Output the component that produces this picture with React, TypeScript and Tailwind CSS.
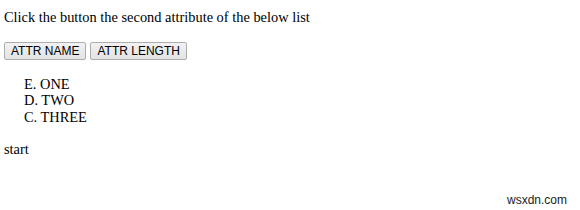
import React from 'react';

const App: React.FC = () => {
    const items = ['ONE', 'TWO', 'THREE'];
    const letters = ['E', 'D', 'C'];

    return (
        <div className="w-[580px] h-[210px] bg-white relative font-['Liberation_Serif',serif] text-[14.4px] leading-[16.5px] text-black overflow-hidden">
            <div className="pl-[4px] pt-[9px]">
                <p>Click the button the second attribute of the below list</p>

                <div className="flex gap-[4px] mt-[16px]">
                    <button className="h-[18px] px-[6px] border border-[#adadad] rounded-[2px] bg-gradient-to-b from-[#f2f2f2] to-[#e3e3e3] font-['Liberation_Sans',sans-serif] text-[12px] leading-[16px] text-black">
                        ATTR NAME
                    </button>
                    <button className="h-[18px] px-[6px] border border-[#adadad] rounded-[2px] bg-gradient-to-b from-[#f2f2f2] to-[#e3e3e3] font-['Liberation_Sans',sans-serif] text-[12px] leading-[16px] text-black">
                        ATTR LENGTH
                    </button>
                </div>

                {/* reversed alpha list */}
                <ul className="mt-[16px] pl-[20px]">
                    {items.map((item, i) => (
                        <li key={item}>
                            {letters[i]}. {item}
                        </li>
                    ))}
                </ul>

                <p className="mt-[16px]">start</p>
            </div>

            <span className="absolute left-[507px] top-[193px] font-['Liberation_Sans',sans-serif] text-[12px] leading-[14px] text-[#222]">
                wsxdn.com
            </span>
        </div>
    );
};

export default App;
